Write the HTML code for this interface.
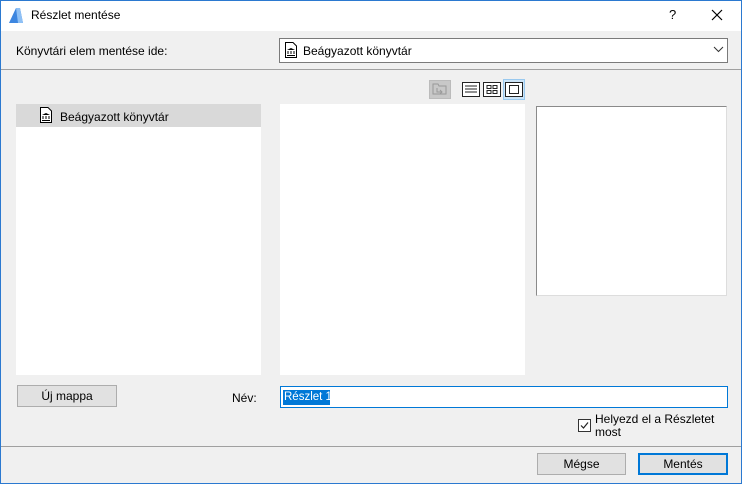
<!DOCTYPE html>
<html><head><meta charset="utf-8"><style>
*{margin:0;padding:0;box-sizing:border-box}
body{width:742px;height:484px;background:#f0f0f0;font-family:"Liberation Sans","DejaVu Sans",sans-serif;font-size:12px;color:#000;position:relative;overflow:hidden}
.a{position:absolute;white-space:nowrap}
.win{left:0;top:0;width:742px;height:484px;border:1px solid #2b79d0}
</style></head><body>
<div class="a" style="left:0;top:0;width:742px;height:31px;background:#fff"></div>
<svg class="a" style="left:8px;top:7px" width="16" height="17"><path d="M1 16 L8 1 L12 1 L15 16Z" fill="#3d86e0"/><path d="M8 1 L12 1 L15 16 L10 16Z" fill="#8ec0f5"/></svg>
<div class="a" style="left:31px;top:8px;font-size:12px">Részlet mentése</div>
<div class="a" style="left:669px;top:7px;font-size:13px">?</div>
<svg class="a" style="left:711px;top:9px" width="12" height="12"><path d="M1 1L11 11M11 1L1 11" stroke="#000" stroke-width="1.2"/></svg>
<div class="a" style="left:16px;top:44px">Könyvtári elem mentése ide:</div>
<div class="a" style="left:279px;top:38px;width:449px;height:25px;background:#fff;border:1px solid #7a7a7a"></div>
<svg class="a" style="left:285px;top:42px" width="12" height="16"><path d="M0.5 0.5H8L11.5 4V15.5H0.5Z" fill="#fff" stroke="#000"/><path d="M2 8L6 6L10 8ZM2.5 9h1v3h-1zM5.5 9h1v3h-1zM8.5 9h1v3h-1zM2 13h8v1H2z" fill="#000"/></svg>
<div class="a" style="left:303px;top:44px">Beágyazott könyvtár</div>
<svg class="a" style="left:713px;top:46px" width="11" height="7"><path d="M1 1L5.5 5.5L10 1" stroke="#333" fill="none"/></svg>
<div class="a" style="left:0;top:69px;width:742px;height:1px;background:#a0a0a0"></div>
<div class="a" style="left:16px;top:104px;width:245px;height:271px;background:#fff"></div>
<div class="a" style="left:16px;top:104px;width:245px;height:23px;background:#d9d9d9"></div>
<svg class="a" style="left:40px;top:107px" width="12" height="16"><path d="M0.5 0.5H8L11.5 4V15.5H0.5Z" fill="#fff" stroke="#000"/><path d="M2 8L6 6L10 8ZM2.5 9h1v3h-1zM5.5 9h1v3h-1zM8.5 9h1v3h-1zM2 13h8v1H2z" fill="#000"/></svg>
<div class="a" style="left:60px;top:110px">Beágyazott könyvtár</div>
<div class="a" style="left:280px;top:104px;width:245px;height:271px;background:#fff"></div>
<div class="a" style="left:536px;top:106px;width:191px;height:190px;background:#fff;border:1px solid #8a8a8a;border-right-color:#ddd;border-bottom-color:#ddd"></div>
<div class="a" style="left:429px;top:80px;width:22px;height:19px;background:#c8c8c8;border:1px solid #bbb"></div>
<svg class="a" style="left:432px;top:82px" width="16" height="14"><path d="M1 2h5l1 2h7v8H1Z" fill="none" stroke="#999"/><path d="M5 6v4h5M8 8l2 2-2 2" stroke="#999" fill="none"/></svg>
<svg class="a" style="left:462px;top:82px" width="18" height="15"><rect x="0.5" y="0.5" width="17" height="14" fill="#fff" stroke="#222"/><path d="M3 4h12M3 7h12M3 10h12" stroke="#222"/></svg>
<svg class="a" style="left:483px;top:82px" width="18" height="15"><rect x="0.5" y="0.5" width="17" height="14" fill="#fff" stroke="#222"/><rect x="4" y="3.5" width="4" height="3" fill="none" stroke="#222"/><rect x="10" y="3.5" width="4" height="3" fill="none" stroke="#222"/><rect x="4" y="8.5" width="4" height="3" fill="none" stroke="#222"/><rect x="10" y="8.5" width="4" height="3" fill="none" stroke="#222"/></svg>
<div class="a" style="left:503px;top:79px;width:22px;height:21px;background:#cce4f7;border:1px solid #99c9ef"></div>
<svg class="a" style="left:505px;top:82px" width="18" height="15"><rect x="0.5" y="0.5" width="17" height="14" fill="#fff" stroke="#222"/><rect x="4.5" y="3.5" width="9" height="8" fill="none" stroke="#222"/></svg>
<div class="a" style="left:17px;top:385px;width:100px;height:22px;background:#e1e1e1;border:1px solid #adadad;text-align:center;line-height:20px">Új mappa</div>
<div class="a" style="left:232px;top:391px">Név:</div>
<div class="a" style="left:280px;top:386px;width:448px;height:22px;background:#fff;border:1px solid #0078d7"></div>
<div class="a" style="left:283px;top:390px;width:47px;height:15px;background:#0078d7"></div>
<div class="a" style="left:284px;top:390px;color:#fff;line-height:15px;font-size:11.5px">Részlet 1</div>
<div class="a" style="left:578px;top:419px;width:13px;height:13px;border:1px solid #333;background:#fff"></div>
<svg class="a" style="left:579px;top:420px" width="11" height="11"><path d="M2 5.5L4.5 8L9 2.5" stroke="#222" fill="none" stroke-width="1.2"/></svg>
<div class="a" style="left:595px;top:413px;line-height:13px">Helyezd el a Részletet<br>most</div>
<div class="a" style="left:0;top:446px;width:742px;height:1px;background:#a0a0a0"></div>
<div class="a" style="left:537px;top:453px;width:89px;height:22px;background:#e1e1e1;border:1px solid #adadad;text-align:center;line-height:20px">Mégse</div>
<div class="a" style="left:638px;top:453px;width:90px;height:22px;background:#e1e1e1;border:2px solid #0078d7;text-align:center;line-height:18px">Mentés</div>
<div class="a win"></div>
</body></html>
